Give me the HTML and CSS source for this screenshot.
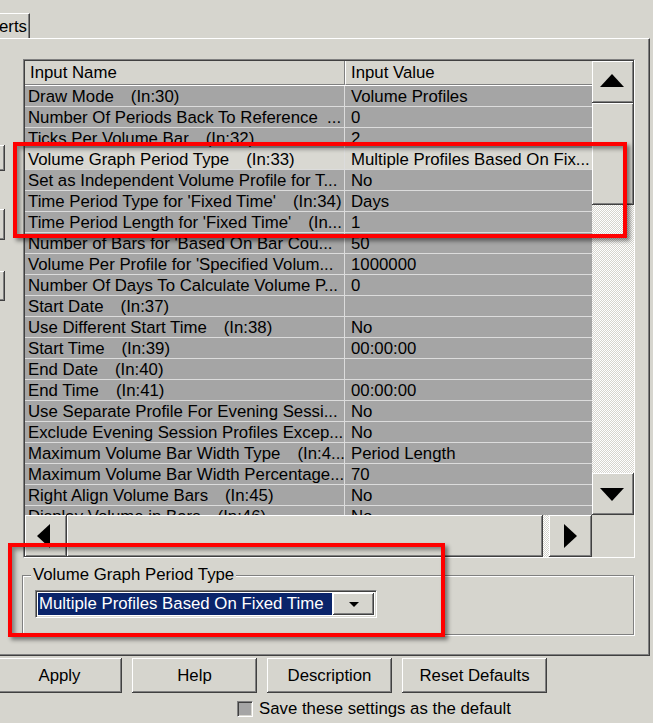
FILE: index.html
```html
<!DOCTYPE html>
<html>
<head>
<meta charset="utf-8">
<link rel="stylesheet" href="styles.css">
</head>
<body>
<div class="window">
  <div class="tabs"><div class="tab">erts</div></div>
  <div class="panel">
    <div class="side">
      <div class="stub stub1"></div>
      <div class="stub stub2"></div>
      <div class="stub stub3"></div>
    </div>
    <div class="content">
      <div class="grid">
        <div class="grid-in">
          <div class="table">
            <div class="head">
              <div class="hcell c1">Input Name</div>
              <div class="hcell c2">Input Value</div>
            </div>
            <div class="row"><div class="c1">Draw Mode<span class="gap"> </span>(In:30)</div><div class="c2">Volume Profiles</div></div>
            <div class="row"><div class="c1">Number Of Periods Back To Reference  ...</div><div class="c2">0</div></div>
            <div class="row"><div class="c1">Ticks Per Volume Bar<span class="gap"> </span>(In:32)</div><div class="c2">2</div></div>
            <div class="row sel"><div class="c1">Volume Graph Period Type<span class="gap"> </span>(In:33)</div><div class="c2">Multiple Profiles Based On Fix...</div></div>
            <div class="row"><div class="c1">Set as Independent Volume Profile for T...</div><div class="c2">No</div></div>
            <div class="row"><div class="c1">Time Period Type for 'Fixed Time'<span class="gap"> </span>(In:34)</div><div class="c2">Days</div></div>
            <div class="row"><div class="c1">Time Period Length for 'Fixed Time'<span class="gap"> </span>(In...</div><div class="c2">1</div></div>
            <div class="row"><div class="c1">Number of Bars for 'Based On Bar Cou...</div><div class="c2">50</div></div>
            <div class="row"><div class="c1">Volume Per Profile for 'Specified Volum...</div><div class="c2">1000000</div></div>
            <div class="row"><div class="c1">Number Of Days To Calculate Volume P...</div><div class="c2">0</div></div>
            <div class="row"><div class="c1">Start Date<span class="gap"> </span>(In:37)</div><div class="c2"></div></div>
            <div class="row"><div class="c1">Use Different Start Time<span class="gap"> </span>(In:38)</div><div class="c2">No</div></div>
            <div class="row"><div class="c1">Start Time<span class="gap"> </span>(In:39)</div><div class="c2">00:00:00</div></div>
            <div class="row"><div class="c1">End Date<span class="gap"> </span>(In:40)</div><div class="c2"></div></div>
            <div class="row"><div class="c1">End Time<span class="gap"> </span>(In:41)</div><div class="c2">00:00:00</div></div>
            <div class="row"><div class="c1">Use Separate Profile For Evening Sessi...</div><div class="c2">No</div></div>
            <div class="row"><div class="c1">Exclude Evening Session Profiles Excep...</div><div class="c2">No</div></div>
            <div class="row"><div class="c1">Maximum Volume Bar Width Type<span class="gap"> </span>(In:4...</div><div class="c2">Period Length</div></div>
            <div class="row"><div class="c1">Maximum Volume Bar Width Percentage...</div><div class="c2">70</div></div>
            <div class="row"><div class="c1">Right Align Volume Bars<span class="gap"> </span>(In:45)</div><div class="c2">No</div></div>
            <div class="row"><div class="c1">Display Volume in Bars<span class="gap"> </span>(In:46)</div><div class="c2">No</div></div>
          </div>
          <div class="vscroll">
            <div class="sbtn up"><svg width="24" height="13" viewBox="0 0 24 13"><polygon points="0,13 24,13 12,0" fill="#000"/></svg></div>
            <div class="sbtn vthumb"></div>
            <div class="track"></div>
            <div class="sbtn down"><svg width="24" height="13" viewBox="0 0 24 13"><polygon points="0,0 24,0 12,13" fill="#000"/></svg></div>
          </div>
          <div class="hscroll">
            <div class="sbtn left"><svg width="13" height="24" viewBox="0 0 13 24"><polygon points="13,0 13,24 0,12" fill="#000"/></svg></div>
            <div class="sbtn hthumb"></div>
            <div class="track"></div>
            <div class="sbtn right"><svg width="13" height="24" viewBox="0 0 13 24"><polygon points="0,0 0,24 13,12" fill="#000"/></svg></div>
          </div>
          <div class="corner"></div>
        </div>
      </div>
      <fieldset class="group">
        <legend>Volume Graph Period Type</legend>
        <div class="combo">
          <div class="combo-text">Multiple Profiles Based On Fixed Time</div>
          <div class="sbtn combo-btn"><svg width="10" height="5" viewBox="0 0 10 5"><polygon points="0,0 10,0 5,5" fill="#000"/></svg></div>
        </div>
      </fieldset>
    </div>
  </div>
  <div class="actions">
    <div class="btn w1">Apply</div>
    <div class="btn w1">Help</div>
    <div class="btn w1">Description</div>
    <div class="btn w2">Reset Defaults</div>
  </div>
  <div class="save">
    <div class="check"></div>
    <div class="save-label">Save these settings as the default</div>
  </div>
  <div class="mark mark1"></div>
  <div class="mark mark2"></div>
</div>
</body>
</html>
```
FILE: styles.css
```css
* { box-sizing: border-box; }
html, body { margin: 0; padding: 0; }
body {
  background: #d6d5ce;
  font-family: "Liberation Sans", Arial, sans-serif;
  font-size: 16.8px;
  color: #000;
}
.window {
  position: relative;
  width: 653px;
  height: 723px;
  overflow: hidden;
  background: #d6d5ce;
}
.tabs { height: 38px; display: flex; align-items: flex-end; }
.tab {
  width: 31px;
  height: 25px;
  margin-left: -1px;
  padding: 4px 5px 0 0;
  border-top: 1px solid #fff;
  border-right: 1px solid #404040;
  box-shadow: inset -1px 0 #808080;
  line-height: 17px;
  text-align: right;
}
.panel {
  width: 650px;
  height: 618px;
  border-top: 1px solid #fff;
  border-right: 1px solid #404040;
  border-bottom: 1px solid #404040;
  box-shadow: inset -1px -1px #808080;
  display: flex;
}
.side {
  width: 23px;
  padding-top: 106px;
  display: flex;
  flex-direction: column;
}
.stub {
  width: 5px;
  background: #d6d5ce;
  box-shadow: inset -1px -1px #404040, inset 0 1px #fff, inset -2px -2px #808080;
}
.stub1 { height: 26px; }
.stub2 { height: 31px; margin-top: 38px; }
.stub3 { height: 30px; margin-top: 31px; }
.content {
  padding-top: 20px;
  display: flex;
  flex-direction: column;
}
.grid {
  width: 612px;
  height: 499px;
  border: 1px solid;
  border-color: #808080 #fff #fff #808080;
}
.grid-in {
  height: 100%;
  border-top: 1px solid #404040;
  border-left: 1px solid #404040;
  display: grid;
  grid-template-columns: 1fr 42px;
  grid-template-rows: 1fr 42px;
}
.table {
  overflow: hidden;
  background: #a5a5a5;
}
.head {
  display: flex;
  height: 25px;
  background: #d6d5ce;
  border-bottom: 1px solid #fff;
}
.hcell {
  height: 24px;
  line-height: 23px;
  border-bottom: 1px solid #808080;
  white-space: pre;
}
.hcell.c1 { width: 320px; padding-left: 5px; border-right: 1px solid #808080; }
.hcell.c2 { flex: 1; padding-left: 5px; border-left: 1px solid #fff; }
.row {
  display: flex;
  height: 21px;
  border-bottom: 1px solid #dcdcdc;
  line-height: 21px;
}
.row .c1 {
  width: 320px;
  padding-left: 3px;
  border-right: 1px solid #dcdcdc;
  white-space: pre;
  overflow: hidden;
}
.row .c2 {
  flex: 1;
  padding-left: 6px;
  white-space: pre;
  overflow: hidden;
}
.gap { display: inline-block; width: 17px; }
.row.sel { background: #d9d8d2; }
.sbtn {
  background: #d6d5ce;
  box-shadow: inset -1px -1px #404040, inset 1px 1px #fff, inset -2px -2px #808080;
  display: flex;
  align-items: center;
  justify-content: center;
}
.sbtn svg { display: block; }
.vscroll { display: flex; flex-direction: column; }
.up, .down { height: 42px; }
.up { padding-bottom: 3px; padding-right: 3px; }
.down { padding-right: 3px; }
.vthumb { height: 102px; }
.track {
  flex: 1;
  background: repeating-conic-gradient(#fff 0 25%, #d6d5ce 0 50%) 0 0 / 2px 2px;
}
.hscroll { display: flex; }
.left { width: 42px; padding-right: 5px; }
.hthumb { width: 476px; }
.right { width: 43px; }
.corner { background: #d6d5ce; }
.group {
  width: 612px;
  height: 69px;
  margin: 8px 0 0 -1px;
  padding: 6px 0 0 12px;
  border: 1px solid #808080;
  box-shadow: inset 1px 1px #fff, 1px 1px #fff;
}
.group legend {
  margin-left: -4px;
  padding: 0 2px;
  line-height: 18px;
  background: #d6d5ce;
}
.combo {
  width: 342px;
  height: 28px;
  border: 1px solid;
  border-color: #808080 #fff #fff #808080;
  box-shadow: inset 1px 1px #404040, inset -1px -1px #d6d5ce;
  background: #fff;
  padding: 2px;
  display: flex;
}
.combo-text {
  flex: 1;
  margin-right: 1px;
  background: #0a246a;
  color: #fff;
  line-height: 22px;
  padding-left: 1px;
  white-space: pre;
}
.combo-btn { width: 41px; }
.actions {
  display: flex;
  gap: 10px;
  margin: 2px 0 0 -3px;
}
.btn {
  height: 35px;
  padding-top: 1px;
  line-height: 34px;
  text-align: center;
  background: #d6d5ce;
  box-shadow: inset -1px -1px #404040, inset 1px 1px #fff, inset -2px -2px #808080;
}
.w1 { width: 125px; }
.w2 { width: 145px; }
.save {
  display: flex;
  align-items: center;
  gap: 6px;
  margin-top: 6px;
  padding-left: 237px;
}
.check {
  width: 16px;
  height: 16px;
  background: #a5a5a5;
  border: 1px solid;
  border-color: #808080 #fff #fff #808080;
  box-shadow: inset 1px 1px #404040, inset -1px -1px #d6d5ce;
}
.save-label { line-height: 18px; padding-top: 1px; }
.mark {
  position: absolute;
  border: 4px solid #ff0000;
  box-shadow: 3px 3px 4px rgba(0,0,0,.45), inset 3px 3px 4px rgba(0,0,0,.4);
}
.mark1 { left: 13px; top: 142px; width: 614px; height: 96px; }
.mark2 { left: 8px; top: 543px; width: 437px; height: 94px; }
```
